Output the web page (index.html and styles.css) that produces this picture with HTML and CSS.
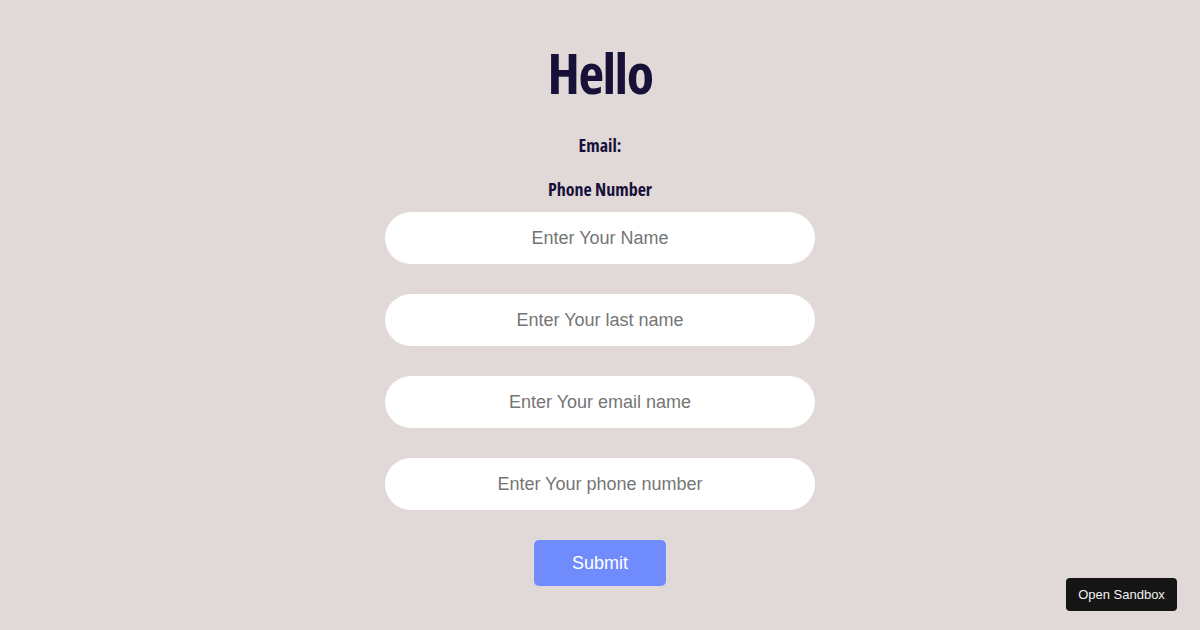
FILE: index.html
```html
<!DOCTYPE html>
<html lang="en">
<head>
<meta charset="utf-8">
<title>Hello</title>
<link rel="stylesheet" href="styles.css">
</head>
<body>
<main class="page">
  <h1 class="title">Hello</h1>
  <p class="label label-email">Email:</p>
  <p class="label label-phone">Phone Number</p>
  <form class="form">
    <input class="field" type="text" placeholder="Enter Your Name">
    <input class="field" type="text" placeholder="Enter Your last name">
    <input class="field" type="text" placeholder="Enter Your email name">
    <input class="field" type="text" placeholder="Enter Your phone number">
    <button class="submit" type="button">Submit</button>
  </form>
</main>
<a class="sandbox" href="#">Open Sandbox</a>
</body>
</html>
```
FILE: styles.css
```css
html, body {
  margin: 0;
  padding: 0;
  background: #e1d8d8;
  height: 100%;
}
body {
  font-family: "Liberation Sans", Arial, sans-serif;
}
.page {
  display: flex;
  flex-direction: column;
  align-items: center;
  padding-top: 43px;
}
.title {
  margin: 0;
  font-family: "Open Sans", "DejaVu Sans", sans-serif;
  font-stretch: 75%;
  font-weight: 700;
  font-size: 56px;
  line-height: 58px;
  height: 58px;
  color: #17113a;
  letter-spacing: -1.5px;
}
.label {
  margin: 0;
  font-family: "Open Sans", "DejaVu Sans", sans-serif;
  font-stretch: 75%;
  font-weight: 700;
  font-size: 18px;
  line-height: 20px;
  color: #17113a;
}
.label-email {
  margin-top: 34px;
}
.label-phone {
  margin-top: 24px;
}
.form {
  display: flex;
  flex-direction: column;
  align-items: center;
  gap: 30px;
  margin-top: 13px;
}
.field {
  box-sizing: border-box;
  width: 430px;
  height: 52px;
  border: none;
  border-radius: 26px;
  background: #ffffff;
  font-family: "Liberation Sans", Arial, sans-serif;
  font-size: 18px;
  text-align: center;
  color: #333;
  outline: none;
  padding: 0 20px;
}
.field::placeholder {
  color: #757575;
}
.submit {
  width: 132px;
  height: 46px;
  border: none;
  border-radius: 5px;
  background: #708bfb;
  color: #ffffff;
  font-family: "Liberation Sans", Arial, sans-serif;
  font-size: 18px;
}
.sandbox {
  position: fixed;
  right: 23px;
  bottom: 19px;
  width: 111px;
  height: 33px;
  box-sizing: border-box;
  display: flex;
  align-items: center;
  justify-content: center;
  background: #151515;
  color: #f2f2f2;
  border-radius: 4px;
  font-family: "Liberation Sans", Arial, sans-serif;
  font-size: 13px;
  text-decoration: none;
}
```
